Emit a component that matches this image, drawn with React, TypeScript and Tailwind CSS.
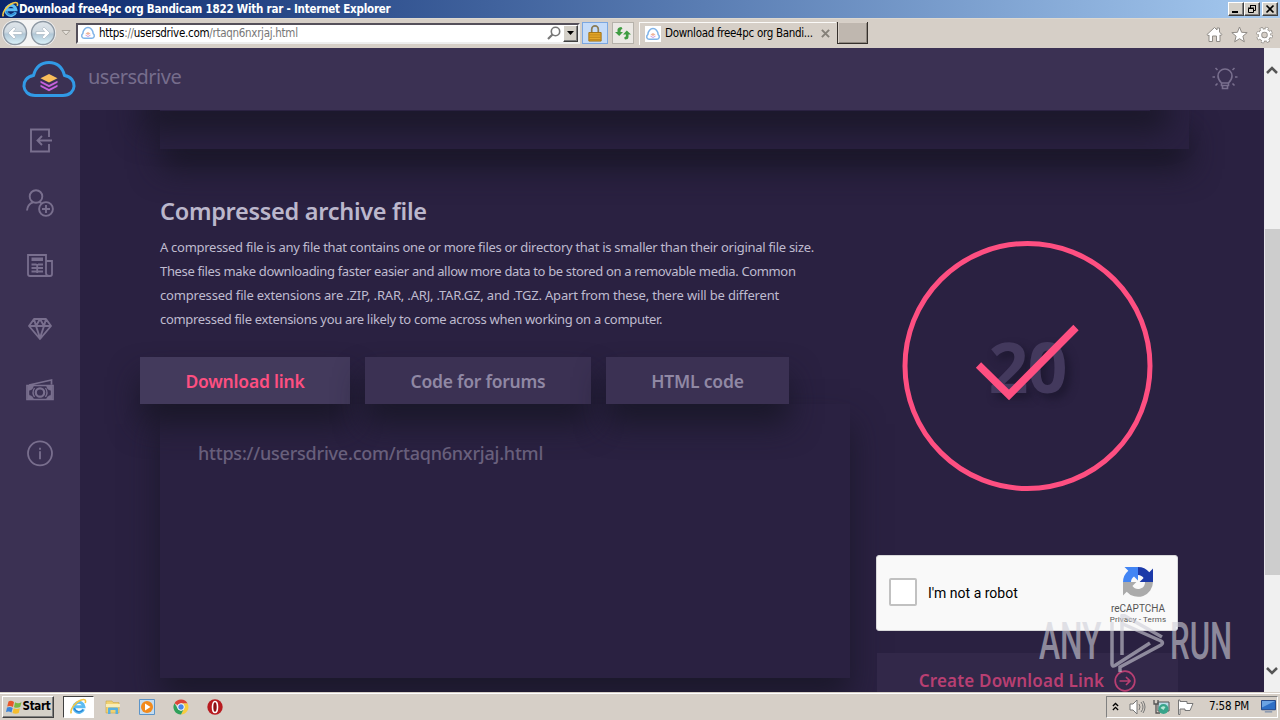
import React from "react";

const ubuntu = "font-['Noto_Sans',sans-serif]";
const tahoma = "font-['DejaVu_Sans_Condensed','DejaVu_Sans',sans-serif]";

function IeLogo({ className }: { className: string }) {
  return (
    <svg viewBox="0 0 16 16" className={className} fill="none">
      <path d="M12.8 10.600A4.700 4.700 0 1 1 13.100 8.200H5" stroke="#5cbcf2" strokeWidth="2.800" />
      <path d="M12.400 11A4.700 4.700 0 0 1 4 9.500" stroke="#2a86d4" strokeWidth="1.300" />
      <path d="M1.300 14.500C-.6 11.500 4.500 4 10.500 1.800c3.500-1.200 4.800.2 3.800 3" stroke="#f3c544" strokeWidth="1.500" />
    </svg>
  );
}

function CloudFavicon() {
  return (
    <svg viewBox="0 0 16 16" className="h-4 w-4 shrink-0" fill="none">
      <rect width="16" height="16" fill="#fff" />
      <path d="M4 13.200C1.400 13.200 1 9.800 2.800 8.600 3 5 5.500 2.500 8 2.500s5 2.500 5.200 6.100c1.800 1.200 1.400 4.600-1.200 4.600z" stroke="#7fb3e8" strokeWidth="1.500" />
      <path d="M5.500 8.500 8 7l2.500 1.500L8 10z" fill="#f0b49a" />
      <path d="m5.500 9.500 2.500 1.600 2.500-1.600v1L8 12l-2.500-1.500z" fill="#cf9be0" />
    </svg>
  );
}

function NavOrb({ flip }: { flip?: boolean }) {
  return (
    <svg viewBox="0 0 26 26" className={flip ? "h-[26px] w-[26px] -scale-x-100" : "h-[26px] w-[26px]"}>
      <defs>
        <linearGradient id={flip ? "orbF" : "orbB"} x1="0" y1="0" x2="0" y2="1">
          <stop offset="0" stopColor="#dfe5ea" />
          <stop offset=".45" stopColor="#cfdae2" />
          <stop offset=".55" stopColor="#b1c7d6" />
          <stop offset="1" stopColor="#dcf3fa" />
        </linearGradient>
      </defs>
      <circle cx="13" cy="13" r="11.500" fill={flip ? "url(#orbF)" : "url(#orbB)"} stroke="#8d98a3" strokeWidth="1.400" />
      <path d="M6 13l6-6 1.900 1.900L11.300 11.500H20v3h-8.700l2.600 2.600L12 19z" fill="#fff" stroke="#a5b2bd" strokeWidth=".6" />
    </svg>
  );
}

function Bevel({ children, className }: { children?: React.ReactNode; className: string }) {
  return (
    <div
      className={
        "flex items-center justify-center border border-t-white border-l-white border-r-[#404040] border-b-[#404040] bg-[#d4d0c8] shadow-[inset_-1px_-1px_0_#808080] " +
        className
      }
    >
      {children}
    </div>
  );
}

function TitleBar() {
  return (
    <div className="flex h-[18px] items-center bg-linear-to-r from-[#0a246a] to-[#a6caf0] pl-[2px] pr-[2px]">
      <IeLogo className="h-[17px] w-[17px] shrink-0" />
      <span className={`${tahoma} whitespace-nowrap text-[11.500px] leading-[18px] font-bold tracking-[-0.220px] text-white`}>
        Download free4pc org Bandicam 1822 With rar - Internet Explorer
      </span>
      <div className="ml-auto flex">
        <Bevel className="h-[14px] w-4">
          <svg viewBox="0 0 12 10" className="h-[10px] w-3"><path d="M2 7h6v2H2z" /></svg>
        </Bevel>
        <Bevel className="h-[14px] w-4">
          <svg viewBox="0 0 12 10" className="h-[10px] w-3" fill="none" stroke="#000">
            <path d="M4.500 4V1.500h5v5H8M4 1.500h6" /><path d="M2.500 4.500h5v4h-5zM2 4h6" />
          </svg>
        </Bevel>
        <Bevel className="ml-[2px] h-[14px] w-4">
          <svg viewBox="0 0 12 10" className="h-[10px] w-3" stroke="#000" strokeWidth="1.700"><path d="M2.500 1.500l7 7M9.500 1.500l-7 7" /></svg>
        </Bevel>
      </div>
    </div>
  );
}

function Toolbar() {
  return (
    <div className="flex h-[30px] items-center bg-[#d6cfc7] pl-[2px] shadow-[inset_0_1px_0_#ddd8d0]">
      <div className="flex gap-[2px] rounded-full bg-[#f4f4f4]">
        <NavOrb />
        <NavOrb flip />
      </div>
      <svg viewBox="0 0 10 6" className="ml-[5px] h-[6px] w-[10px] shrink-0"><path d="M1 .5h8L5 5z" fill="#e6e2dc" stroke="#a8a29a" /></svg>
      <div className="ml-[5px] flex h-[21px] w-[504px] items-center border-2 border-t-[#55505a] border-l-[#55505a] border-r-[#eee] border-b-[#eee] bg-white pl-[2px]">
        <CloudFavicon />
        <span className={`${tahoma} mt-[2px] ml-[3px] text-[11.500px] tracking-[-0.290px] text-[#777]`}>
          <span className="text-black">https</span>://<span className="text-black">usersdrive.com</span>/rtaqn6nxrjaj.html
        </span>
        <svg viewBox="0 0 14 14" className="ml-auto h-[14px] w-[14px]" fill="none" stroke="#777">
          <circle cx="8.500" cy="5.500" r="4.200" strokeWidth="1.600" /><path d="M5.500 8.500L1 13" strokeWidth="2.200" />
        </svg>
        <Bevel className="ml-[2px] h-[17px] w-[15px]">
          <svg viewBox="0 0 7 4" className="h-1 w-[7px]"><path d="M0 0h7L3.500 4z" /></svg>
        </Bevel>
      </div>
      <div className="ml-[2px] flex h-[22px] w-[26px] items-center justify-center border border-[#7ca7e0] bg-[#c5dbf8]">
        <svg viewBox="0 0 14 18" className="h-[17px] w-[14px]">
          <path d="M3.500 9V4.500a3.500 3.500 0 0 1 7 0V9" fill="none" stroke="#8b7c55" strokeWidth="1.800" />
          <path d="M.5 8h13v9H.5z" fill="#e5a82b" stroke="#a06f10" />
          <path d="M1 10.500h12M1 13h12M1 15.500h12" stroke="#b97f18" strokeWidth=".9" />
        </svg>
      </div>
      <div className="ml-[4px] flex h-[22px] w-[22px] items-center justify-center border border-[#b6b2ab] bg-[#ebe8e4]">
        <svg viewBox="0 0 16 14" className="h-[14px] w-4" fill="#3f9c42">
          <path d="M0 6h2.500V3.500Q3 1 6.500 1L7.500 3Q5.500 3 5.500 6H8L4.200 10z" />
          <path d="M16 8.500h-2.500V11q0 2.500-3.500 2.500L9 11.500q2 0 2-3H8L11.800 4.500z" />
        </svg>
      </div>
      <div className="ml-[5px] flex h-[23px] w-[197px] items-center border-t border-l border-[#fbfaf8] pl-[5px]">
        <CloudFavicon />
        <span className={`${tahoma} mt-[1px] ml-[4px] text-[11.500px] tracking-[-0.310px] whitespace-nowrap text-black`}>Download free4pc org Bandi...</span>
        <svg viewBox="0 0 10 10" className="ml-auto mr-[6px] h-[9px] w-[9px]" stroke="#858078" strokeWidth="2.200"><path d="M1 1l8 8M9 1l-8 8" /></svg>
      </div>
      <div className="ml-px h-[22px] w-[31px] border border-t-0 border-[#35302c] bg-[#bfb7af] shadow-[inset_1px_1px_0_#d8d0c8,inset_-1px_-1px_0_#8f8880]" />
      <div className="mr-[7px] ml-auto flex items-center gap-[8px] pt-[3px]">
        <svg viewBox="0 0 17 17" className="h-[17px] w-[17px]" fill="#fff" stroke="#8f8b86">
          <path d="M1 8.500L8.500 1.500 11 4V2h2.500v4.200L16 8.500l-1 1.200-1-.8V15.500h-3.500V10h-4v5.500H3V9l-1 .8z" />
        </svg>
        <svg viewBox="0 0 17 17" className="h-[17px] w-[17px]" fill="#fff" stroke="#8f8b86">
          <path d="M8.500 1l2.100 5.300 5.600.3-4.300 3.600 1.400 5.600-4.800-3.100-4.800 3.100 1.400-5.600L.8 6.600l5.600-.3z" />
        </svg>
        <svg viewBox="0 0 18 18" className="h-[18px] w-[17px]">
          <circle cx="9" cy="9" r="6.900" fill="none" stroke="#8f8b86" strokeWidth="3.800" strokeDasharray="3 2.420" />
          <circle cx="9" cy="9" r="4.800" fill="none" stroke="#8f8b86" strokeWidth="4.500" />
          <circle cx="9" cy="9" r="6.700" fill="none" stroke="#fff" strokeWidth="2.800" strokeDasharray="2.200 3.060" strokeDashoffset="-.4" />
          <circle cx="9" cy="9" r="4.800" fill="none" stroke="#fff" strokeWidth="2.800" />
        </svg>
      </div>
    </div>
  );
}

function SiteHeader() {
  return (
    <header className="flex h-[62px] shrink-0 items-center bg-[#3b3153] pl-[22px] pr-[26px]">
      <svg viewBox="0 0 54 38" className="h-[38px] w-[54px]" fill="none">
        <path d="M13 35.500C-1 35.500-2 17.500 11.500 15.500 14 6 20 2.500 27 2.500s13 3.500 15.500 13C56 17.500 55 35.500 41 35.500z" stroke="#319ae6" strokeWidth="3" strokeLinejoin="round" />
        <path d="M18.500 18.200L27 14l8.500 4.200L27 22.500z" fill="#f9bd5b" />
        <path d="M18.500 20.700L27 25l8.500-4.300v2L27 27.200l-8.500-4.500zM18.500 24.700L27 29l8.500-4.300v2L27 31.200l-8.500-4.500z" fill="#c661dc" />
      </svg>
      <span className={`${ubuntu} ml-[12px] -mt-[5px] text-[20px] tracking-[-0.500px] text-[#766d8c]`}>usersdrive</span>
      <svg viewBox="0 0 26 26" className="-mt-[3px] ml-auto h-[26px] w-[26px]" fill="none" stroke="#796f8e" strokeWidth="1.600">
        <path d="M9.500 20.500V18C7 15.500 6 14 6 11a7 7 0 0 1 14 0c0 3-1 4.500-3.500 7v2.500z" />
        <path d="M9.500 18h7M10.500 21v2.500h5V21" />
        <path d="M.5 12h2.500M23 12h2.500M3.500 3l2 2M22.500 3l-2 2M3.500 20.500l2-2M22.500 20.500l-2-2" />
      </svg>
    </header>
  );
}

function Sidebar() {
  const cls = "h-7 w-7";
  return (
    <nav className="flex w-20 shrink-0 flex-col items-center gap-[34.700px] bg-[#3b3153] pt-[16px] text-[#796f8e]">
      <svg viewBox="0 0 28 28" className={cls} fill="none" stroke="currentColor" strokeWidth="1.900">
        <path d="M23 11V3.500H5v22h18V18M26 14.500H12M16 10l-4.500 4.500L16 19" />
      </svg>
      <svg viewBox="0 0 28 28" className={cls} fill="none" stroke="currentColor" strokeWidth="1.900">
        <circle cx="10" cy="7.500" r="6.300" /><path d="M1 21.500c.3-4 2.500-7 6-8.200M13 13l3 1.500" />
        <circle cx="20" cy="20" r="6.900" /><path d="M20 16v8M16 20h8" />
      </svg>
      <svg viewBox="0 0 28 28" className={cls} fill="none" stroke="currentColor" strokeWidth="1.800">
        <path d="M20 22V4H2v19q0 2 2 2h20q2 0 2-2V10h-6v12q0 3 3 3" />
        <path d="M5.500 9h11.500M5.500 7.500h11.500M5.500 13.500h5M12 13.500h5M5.500 17h5M12 17h5M5.500 20.500h5M12 20.500h5M11.200 13v9" />
      </svg>
      <svg viewBox="0 0 28 28" className={cls} fill="none" stroke="currentColor" strokeWidth="1.900" strokeLinejoin="round">
        <path d="M8 5h12l5 7-11 13L3 12zM3.500 12h21M8 5l2 7 4 12 4-12 2-7M10 12l4-7 4 7" />
      </svg>
      <svg viewBox="0 0 28 28" className={cls} fill="none" stroke="currentColor" strokeWidth="1.700">
        <path d="M3 8L25.500 3v4.500M1 8.500h26v14H1z" />
        <path d="M2 9h5.500Q7 13 3 13.500v4.500q4 1 4.500 4H2zM26 9h-5.500q.5 4 4.500 4.500v4.500q-4 1-4.500 4H26z" fill="currentColor" strokeWidth=".4" />
        <path d="M8.500 11q-3 4.500 0 9M19.500 11q3 4.500 0 9" strokeWidth="1.300" />
        <circle cx="14" cy="15.500" r="4.200" strokeWidth="2.200" />
      </svg>
      <svg viewBox="0 0 28 28" className={cls} fill="none" stroke="currentColor" strokeWidth="1.800">
        <circle cx="14" cy="14.300" r="12" /><path d="M14 12.300v8M14 8.800v2" />
      </svg>
    </nav>
  );
}

function LinkPanel() {
  return (
    <section className="w-[690px] shrink-0">
      <h2 className={`${ubuntu} mt-[45px] h-[34px] text-[23.500px] leading-[34px] font-semibold tracking-[-0.290px] whitespace-nowrap text-[#bbb7cc]`}>
        Compressed archive file
      </h2>
      <div className={`${ubuntu} mt-[7px] text-[13px] leading-6 whitespace-nowrap text-[#bfbbcf]`}>
        <p className="tracking-[-0.282px]">
          A compressed file is any file that contains one or more files or directory that is smaller than their original file size.
        </p>
        <p className="tracking-[-0.350px]">
          These files make downloading faster easier and allow more data to be stored on a removable media. Common
        </p>
        <p className="tracking-[-0.182px]">
          compressed file extensions are .ZIP, .RAR, .ARJ, .TAR.GZ, and .TGZ. Apart from these, there will be different
        </p>
        <p className="tracking-[-0.315px]">compressed file extensions you are likely to come across when working on a computer.</p>
      </div>
      <div className={`${ubuntu} relative z-10 mt-[26px] -ml-5 flex gap-[15px] text-[17.500px] leading-[48px] font-semibold whitespace-nowrap text-[#9088a4]`}>
        <div className="h-[47px] w-[210px] bg-[#433a5c] text-center tracking-[-0.210px] text-[#fe4f81] shadow-[0_20px_30px_rgba(24,22,38,0.9)]">Download link</div>
        <div className="h-[47px] w-[226px] bg-[#3b3153] text-center tracking-[-0.250px] shadow-[0_20px_30px_rgba(24,22,38,0.85)]">Code for forums</div>
        <div className="h-[47px] w-[183px] bg-[#3b3153] text-center tracking-[-0.200px] shadow-[0_20px_30px_rgba(24,22,38,0.85)]">HTML code</div>
      </div>
      <div className={`${ubuntu} h-[274px] bg-[#2a2141] px-[38px] pt-[35px] text-[18px] leading-[28px] font-medium tracking-[-0.220px] text-[#6a617e] shadow-[0_20px_30px_rgba(24,22,38,0.8)]`}>
        https://usersdrive.com/rtaqn6nxrjaj.html
      </div>
    </section>
  );
}

function Recaptcha() {
  return (
    <div className="flex h-[76px] w-[302px] items-center rounded-[3px] border border-[#d8d8da] bg-[#f9f9f9] pl-[12px] font-['Roboto',sans-serif]">
      <div className="-mt-[3px] h-7 w-7 rounded-[2px] border-2 border-[#c1c1c1] bg-white" />
      <span className="ml-[11px] text-[14px] text-black">I'm not a robot</span>
      <div className="mt-[5px] mr-[5px] ml-auto flex w-[68px] flex-col items-center text-[#555]">
        <svg viewBox="0 0 32 32" className="h-8 w-8">
          <path d="M31 16V2.500l-3.700 3.700A15 15 0 0 0 16 1v8c2.500 0 4.500 1.400 5.600 3l-4 4z" fill="#1c3aa9" />
          <path d="M16 1H2.500l3.800 3.700A15 15 0 0 0 1 16h8c0-2.500 1.400-4.500 3-5.600l4 4z" fill="#4285f4" />
          <path d="M1 16v13.500l3.700-3.800A15 15 0 0 0 31 16h-8c0 5-3.500 7-7 7-2.500 0-4-1-5.600-3l4-4z" fill="#ababab" />
        </svg>
        <span className="mt-[5px] text-[10px] leading-[12px]">reCAPTCHA</span>
        <span className="text-[8px] leading-[10px] tracking-[0.150px] whitespace-nowrap">Privacy - Terms</span>
      </div>
    </div>
  );
}

function CreatePanel() {
  return (
    <section className="ml-[26px] w-[302px] shrink-0">
      <div className="mt-[91px] ml-[26px] grid h-[251px] w-[251px] place-items-center">
        <span className="col-start-1 row-start-1 font-['Open_Sans',sans-serif] text-[70px] leading-none font-bold tracking-[-1px] text-[#43395d] [text-shadow:5px_5px_8px_#1d1830]">20</span>
        <svg viewBox="0 0 251 251" className="z-10 col-start-1 row-start-1 h-[251px] w-[251px]" fill="none" stroke="#fe4f81">
          <circle cx="125.500" cy="126" r="122.500" strokeWidth="5" />
          <path d="M76.500 125l30.500 30L174 87.500" strokeWidth="7.500" />
        </svg>
      </div>
      <div className="mt-[64px]"><Recaptcha /></div>
      <div className={`${ubuntu} mt-[22px] ml-[1px] flex h-[56px] items-center justify-center gap-[10px] bg-[#322849] text-[17px] font-semibold text-[#b83f72]`}>
        <span className="tracking-[0.190px] whitespace-nowrap">Create Download Link</span>
        <svg viewBox="0 0 22 22" className="h-[22px] w-[22px]" fill="none" stroke="currentColor" strokeWidth="1.700">
          <circle cx="11" cy="11" r="9.800" /><path d="M5.500 11h10.500M12 7l4 4-4 4" />
        </svg>
      </div>
    </section>
  );
}

function PageScrollbar() {
  return (
    <div className="flex w-4 shrink-0 flex-col items-center bg-[#f0f0f0] pt-[18px] pb-[17px]">
      <svg viewBox="0 0 12 8" className="h-2 w-3" fill="none" stroke="#555" strokeWidth="2.500"><path d="M1 7l5-5 5 5" /></svg>
      <div className="mt-[155px] h-[346px] w-[15px] bg-[#cdcdcd]" />
      <svg viewBox="0 0 12 8" className="mt-auto h-2 w-3" fill="none" stroke="#555" strokeWidth="2.500"><path d="M1 1l5 5 5-5" /></svg>
    </div>
  );
}

function Watermark() {
  return (
    <div className="absolute top-[614px] left-[1039px] z-20 h-[60px] w-[194px] font-['Roboto',sans-serif] text-[52px] leading-[56px] font-medium text-[#cfcfd8] opacity-60">
      <span className="absolute top-0 left-0 origin-left scale-x-[0.610]">ANY</span>
      <svg viewBox="0 0 56 60" className="absolute top-0 left-[70px] h-[60px] w-[56px]" fill="none" stroke="currentColor" strokeWidth="3.500">
        <path d="M3 8v42q0 3 3 1.500L41 29M13 8v33M13 8V2q0-2 3 0L53 23M14 10l38 17q3 2 0 4L11 53v5" />
      </svg>
      <span className="absolute top-0 left-[131px] origin-left scale-x-[0.600]">RUN</span>
    </div>
  );
}

function Taskbar() {
  return (
    <div className={`${tahoma} flex h-7 items-center border-t border-[#d6cfc7] bg-[#d6cfc7] pl-[2px] shadow-[inset_0_1px_0_#fff]`}>
      <Bevel className="h-[22px] w-[52px] gap-[1px]">
        <svg viewBox="0 0 16 16" className="h-4 w-4">
          <path d="M2.500 2.500Q5 1 8 3L7 8Q4 6.500 1.200 7.500z" fill="#e8572a" />
          <path d="M9 3.300q3 1.700 6.500 0L14.200 8q-3 1.500-6.200.2z" fill="#79b943" />
          <path d="M1 8.500q3-1.300 5.700.4L5.500 13.500Q3 12 0 13z" fill="#3c84d8" />
          <path d="M7.700 9.200q3 1.500 6.200 0L12.700 14q-3 1.500-6.200 0z" fill="#f5bd2e" />
        </svg>
        <span className="text-[11.500px] font-bold tracking-[-0.300px]">Start</span>
      </Bevel>
      <div className="ml-[9px] flex h-[22px] w-[31px] items-center justify-center border border-t-[#404040] border-l-[#404040] border-r-white border-b-white bg-white">
        <IeLogo className="h-[17px] w-[17px]" />
      </div>
      <svg viewBox="0 0 16 16" className="ml-[11px] h-4 w-4">
        <path d="M1 2h6l1 1.500h6V14H1z" fill="#f1d272" stroke="#c8a64a" strokeWidth=".6" />
        <path d="M1 5h14v3H1z" fill="#faedb5" /><path d="M3 15V9.500q0-1 1-1h8q1 0 1 1V15h-2.500v-4h-5v4z" fill="#58b0e0" />
      </svg>
      <svg viewBox="0 0 16 16" className="ml-[18px] h-4 w-4">
        <path d="M.5.5h15v15H.5z" fill="#c4dcf0" stroke="#5c94c8" /><circle cx="8" cy="8" r="6" fill="#f28a1c" /><path d="M6 4.500v7L11.500 8z" fill="#fff" />
      </svg>
      <svg viewBox="0 0 16 16" className="ml-[18px] h-4 w-4">
        <path d="M8 8L1.500 4.200A7.500 7.500 0 0 1 14.600 4.500H8z" fill="#dc4437" />
        <path d="M8 8H8V4.500h6.600A7.500 7.500 0 0 1 8 15.500L11 10z" fill="#f8cd3e" />
        <path d="M1.500 4.200L5 10l3 1.500 2.500-1L8 15.500A7.500 7.500 0 0 1 1.500 4.200z" fill="#2fa05a" />
        <circle cx="8" cy="8" r="3.300" fill="#4a87e8" stroke="#fff" />
      </svg>
      <svg viewBox="0 0 16 16" className="ml-[18px] h-4 w-4">
        <circle cx="8" cy="8" r="7.700" fill="#b81b20" /><ellipse cx="8" cy="8" rx="2.500" ry="5.500" fill="#8c1015" stroke="#fff" strokeWidth="1.600" />
      </svg>
      <div className="mr-[2px] ml-auto flex h-[22px] w-[172px] items-center border border-t-[#808080] border-l-[#808080] border-r-white border-b-white">
        <svg viewBox="0 0 8 10" className="ml-[5px] h-[9px] w-[7px]" fill="none" stroke="#000" strokeWidth="1.500"><path d="M1 4.500l3-3 3 3M1 9l3-3 3 3" /></svg>
        <svg viewBox="0 0 17 16" className="ml-[10px] h-4 w-[17px]" fill="none" stroke="#777">
          <path d="M1 5h3l4-4v14l-4-4H1z" fill="#fff" /><path d="M10 5q2 3 0 6M12 3q4 5 0 10M14 2q4 6 0 12" />
        </svg>
        <svg viewBox="0 0 17 16" className="ml-[7px] h-4 w-[17px]" fill="none">
          <path d="M5 3h11v9H5z" fill="#b9dce8" stroke="#555" /><path d="M1 1v4h4V1M3 5v9h4" stroke="#555" strokeWidth="1.300" /><circle cx="10.500" cy="10" r="5" fill="#37a48a" /><path d="M7.500 9q2-3 5-1l-2 3z" fill="#b4e6d5" />
        </svg>
        <svg viewBox="0 0 17 16" className="ml-[7px] h-4 w-[17px]"><path d="M1.500 1v14.500h1.500V10h5v1.500h5l3-7h-6V2.500H3V1z" fill="#fff" stroke="#777" /></svg>
        <span className="mt-px ml-[15px] text-[11.500px] tracking-[-0.250px] whitespace-nowrap">7:58 PM</span>
        <svg viewBox="0 0 16 14" className="ml-auto mr-[1px] h-[13px] w-[15px]"><path d="M.5.5h15v10H.5z" fill="#2e6fc6" stroke="#1b3f83" /><path d="M1 1h14L1 8z" fill="#6ba3e3" /><path d="M4 12h8v1.500H4z" fill="#8293ad" /></svg>
      </div>
    </div>
  );
}

export default function App() {
  return (
    <div className="relative flex h-[720px] w-[1280px] flex-col overflow-hidden bg-[#d6cfc7]">
      <TitleBar />
      <Toolbar />
      <div className="flex h-[644px]">
        <div className="flex min-w-0 flex-1 flex-col">
          <SiteHeader />
          <div className="flex h-[582px]">
            <Sidebar />
            <main className="min-w-0 flex-1 overflow-hidden bg-[#2a2141] pl-20">
              <div className="flex h-[39px] w-[1029px] items-start overflow-visible bg-[#2a2141] shadow-[0_20px_30px_rgba(24,22,38,0.9)]">
                <div className="h-[1px] w-[990px] shadow-[0_2px_30px_18px_rgba(24,22,38,0.9)]" />
              </div>
              <div className="flex">
                <LinkPanel />
                <CreatePanel />
              </div>
            </main>
          </div>
        </div>
        <PageScrollbar />
      </div>
      <Taskbar />
      <Watermark />
    </div>
  );
}
